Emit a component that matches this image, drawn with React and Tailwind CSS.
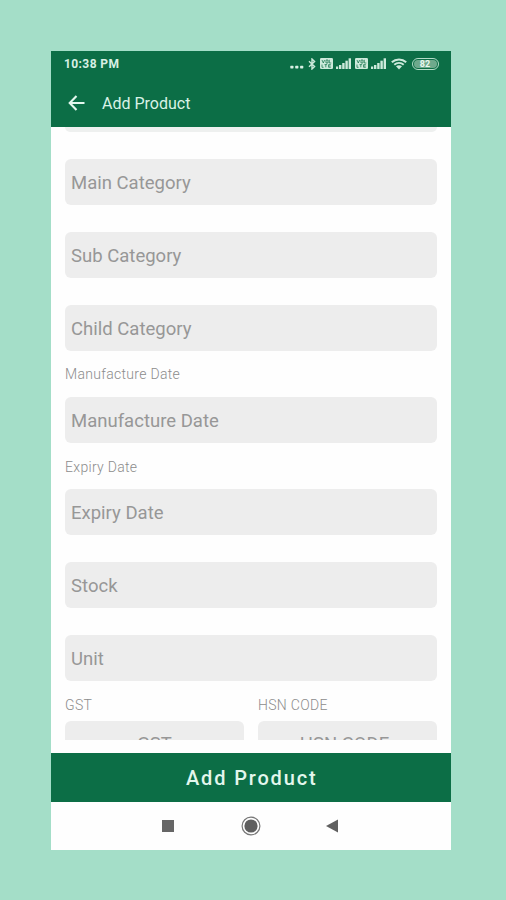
import React from "react";

function VolteIcon() {
  return (
    <svg width="13" height="11" viewBox="0 0 13 11" className="shrink-0">
      <rect width="13" height="11" rx="1.2" fill="#cdeadb" />
      <path d="M2 2l1.3 3L4.6 2M6 2h2v3H6zM9.3 1.8V5h2M2 6.5v2.8h1.6M4.5 6.6h2.6M5.8 6.6v2.7M10.8 6.6H8.6v2.7h2.2M8.6 8h2" fill="none" stroke="#0c6e46" strokeWidth="0.7" />
    </svg>
  );
}

function SignalIcon() {
  return (
    <svg width="15" height="11" viewBox="0 0 15 11" className="shrink-0" fill="#cdeadb">
      <rect x="0" y="8.5" width="2.2" height="2.5" />
      <rect x="3" y="7" width="2.4" height="4" />
      <rect x="6.2" y="5" width="2.4" height="6" />
      <rect x="9.4" y="2.7" width="2.4" height="8.3" />
      <rect x="12.6" y="0.3" width="2.4" height="10.7" />
    </svg>
  );
}

function StatusBar() {
  return (
    <div className="flex h-[25px] items-center pl-[13px] pr-[12px]">
      <span className="text-[12px] font-bold leading-none tracking-[0.4px] text-[#d8f0e4]">10:38 PM</span>
      <div className="ml-auto flex items-center">
        <svg width="14" height="14" viewBox="0 0 14 14" className="mr-[4px]" fill="#d8f0e4">
          <rect x="0.3" y="8.8" width="3.2" height="2.6" rx="0.6" />
          <rect x="5.2" y="8.8" width="3.2" height="2.6" rx="0.6" />
          <rect x="10.1" y="8.8" width="3.2" height="2.6" rx="0.6" />
        </svg>
        <svg width="8" height="12" viewBox="0 0 8 12" className="mr-[4px]" fill="none" stroke="#cdeadb" strokeWidth="1.4">
          <path d="M1 3.2l5.6 5.3L4 11V1l2.6 2.5L1 8.8" />
        </svg>
        <VolteIcon />
        <span className="w-[3px]" />
        <SignalIcon />
        <span className="w-[4px]" />
        <VolteIcon />
        <span className="w-[3px]" />
        <SignalIcon />
        <svg width="16" height="12" viewBox="0 0 16 12" className="ml-[5px] mr-[5px]" fill="none" stroke="#cdeadb">
          <path d="M0.8 4.2c4-3.7 10.4-3.7 14.4 0" strokeWidth="2" />
          <path d="M3.3 6.7c2.7-2.5 6.7-2.5 9.4 0" strokeWidth="1.9" />
          <path d="M5 8.2c1.7-1.2 4.3-1.2 6 0L8 11.6z" fill="#cdeadb" stroke="none" />
        </svg>
        <div className="flex h-[12px] w-[27px] items-center justify-center rounded-full border border-[#b5dcc8] p-px">
          <div className="flex h-full w-full items-center justify-center rounded-full bg-[#6ea98c] pt-px text-[9px] font-bold leading-none text-[#e8f8f0]">
            82
          </div>
        </div>
      </div>
    </div>
  );
}

function Field({ children }) {
  return (
    <div className="flex h-[46px] shrink-0 items-center rounded-[6px] bg-[#ededed] pl-[6px] pt-[3px] text-[18.5px] tracking-[0.01px] text-[#979797]">
      {children}
    </div>
  );
}

function Label({ children }) {
  return <div className="h-[16px] text-[14px] font-light leading-[16px] tracking-[0.3px] text-[#8c8c8c]">{children}</div>;
}

function HalfField({ children, className = "" }) {
  return (
    <div className="flex-1">
      <Label>{children}</Label>
      <div className={`mt-[8px] flex h-[46px] justify-center rounded-[6px] bg-[#ededed] pt-[12px] text-[18.5px] leading-[22px] text-[#979797] ${className}`}>
        {children}
      </div>
    </div>
  );
}

export default function App() {
  return (
    <div className="h-[900px] w-[506px] overflow-hidden bg-[#a4dec8] pl-[51px] pt-[51px] font-['Roboto',sans-serif]">
      <div className="flex h-[799px] w-[399.5px] flex-col bg-[#fefefe]">
        <header className="h-[76px] shrink-0 bg-[#0c6e46]">
          <StatusBar />
          <div className="flex h-[51px] items-center pl-[17px] pt-[2px]">
            <svg width="17" height="16" viewBox="0 0 17 16" fill="none" stroke="#e3f7ed" strokeWidth="2.1">
              <path d="M16.5 8H2M8.5 1L1.7 8l6.8 7" />
            </svg>
            <h1 className="ml-[17px] pt-[2px] text-[16px] leading-none text-[#d9f3e7]">Add Product</h1>
          </div>
        </header>

        <main className="h-[613px] shrink-0 overflow-hidden pl-[14px] pr-[13.5px]">
          <div className="h-[5px] rounded-b-[6px] bg-[#eef0ef]" />
          <div className="mt-[27px] flex flex-col gap-[27px]">
            <Field>Main Category</Field>
            <Field>Sub Category</Field>
            <Field>Child Category</Field>
          </div>
          <div className="mt-[15px] flex flex-col gap-[15px]">
            <Label>Manufacture Date</Label>
            <Field>Manufacture Date</Field>
          </div>
          <div className="mt-[16px] flex flex-col gap-[14px]">
            <Label>Expiry Date</Label>
            <Field>Expiry Date</Field>
          </div>
          <div className="mt-[27px] flex flex-col gap-[27px]">
            <Field>Stock</Field>
            <Field>Unit</Field>
          </div>
          <div className="mt-[16px] flex gap-[14px]">
            <HalfField>GST</HalfField>
            <HalfField className="pr-[6px]">HSN CODE</HalfField>
          </div>
        </main>

        <button className="mt-[13px] h-[49px] w-full shrink-0 bg-[#0c6e46] pl-[2px] pt-px text-[20px] font-medium leading-none tracking-[1.85px] text-[#e3f7ed]">
          Add Product
        </button>

        <nav className="flex h-[48px] items-center pl-[111px]">
          <span className="h-[12px] w-[12px] bg-[#666666]" />
          <svg width="20" height="20" viewBox="0 0 20 20" className="ml-[67px]">
            <circle cx="10" cy="10" r="8.9" fill="none" stroke="#777777" strokeWidth="1.2" />
            <circle cx="10" cy="10" r="6.6" fill="#5f5f5f" />
          </svg>
          <svg width="12" height="14" viewBox="0 0 12 14" className="ml-[65px]">
            <path d="M0 7L12 0.5v13z" fill="#606060" />
          </svg>
        </nav>
      </div>
    </div>
  );
}
